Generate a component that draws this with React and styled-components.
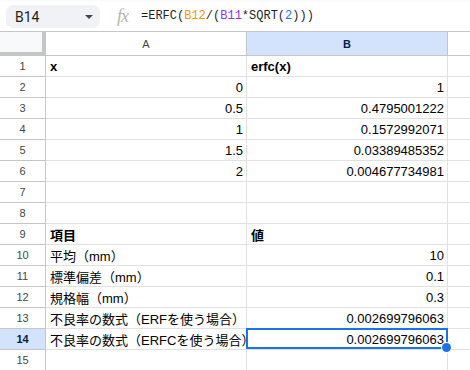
import React from "react";
import styled, { createGlobalStyle, css } from "styled-components";

const Global = createGlobalStyle`
  html, body { margin: 0; padding: 0; background: #fff; overflow: hidden; }
  body { font-family: "Liberation Sans", "Noto Sans CJK JP", Arial, sans-serif; }
`;

const Page = styled.div`
  width: 470px;
  height: 370px;
  display: flex;
  flex-direction: column;
  overflow: hidden;
  background: #fff;
`;

const Toolbar = styled.div`
  height: 31px;
  flex: none;
  display: flex;
  align-items: flex-start;
  padding: 5px 0 0 6px;
  box-sizing: border-box;
  background: linear-gradient(#f9fafb 0, #fff 3px);
`;

const NameBox = styled.div`
  width: 94px;
  height: 23px;
  box-sizing: border-box;
  background: #f0f2f5;
  border-radius: 7px;
  display: flex;
  align-items: center;
  justify-content: space-between;
  padding: 0 7px 0 9px;
  font-family: Roboto, "Liberation Sans", sans-serif;
  font-size: 14px;
  color: #1f1f1f;
`;

const Caret = styled.span`
  width: 0;
  height: 0;
  border-left: 4px solid transparent;
  border-right: 4px solid transparent;
  border-top: 4px solid #444746;
  margin-top: 1px;
`;

const FxIcon = styled.span`
  margin: 0 0 0 17px;
  width: 18px;
  font-family: "Liberation Serif", "DejaVu Serif", serif;
  font-style: italic;
  font-size: 18px;
  line-height: 22px;
  color: #b4b4b4;
  letter-spacing: -1px;
`;

const Formula = styled.div`
  margin-left: 6px;
  font-family: "Liberation Mono", "DejaVu Sans Mono", monospace;
  font-size: 12px;
  line-height: 23px;
  color: #1f1f1f;
  white-space: nowrap;
`;

const Ref = styled.span`
  color: ${(p) => p.$c};
`;

const Grid = styled.div`
  display: grid;
  grid-template-columns: 46px 201px 201px 1fr;
  grid-auto-rows: 21px;
  grid-template-rows: 24px;
  border-top: 1px solid #c4c7c5;
`;

const Corner = styled.div`
  background: #f8f9fa;
  border-right: 4px solid #c4c7c5;
  border-bottom: 4px solid #c4c7c5;
  box-sizing: border-box;
`;

const ColHeader = styled.div`
  box-sizing: border-box;
  border-right: 1px solid #c4c7c5;
  border-bottom: 1px solid #c4c7c5;
  display: flex;
  align-items: center;
  justify-content: center;
  font-family: "Liberation Sans", Arial, sans-serif;
  font-size: 11px;
  color: #444746;
  background: #fff;
  ${(p) =>
    p.$active &&
    css`
      background: #d3e3fd;
      color: #041e49;
      font-weight: bold;
    `}
  ${(p) =>
    p.$last &&
    css`
      border-right: none;
    `}
`;

const RowHeader = styled.div`
  box-sizing: border-box;
  border-right: 1px solid #c4c7c5;
  border-bottom: 1px solid #c4c7c5;
  display: flex;
  align-items: center;
  justify-content: center;
  font-family: "Liberation Sans", Arial, sans-serif;
  font-size: 11px;
  color: #444746;
  background: #fff;
  ${(p) =>
    p.$active &&
    css`
      background: #d3e3fd;
      color: #041e49;
      font-weight: bold;
    `}
`;

const Cell = styled.div`
  position: relative;
  box-sizing: border-box;
  border-right: 1px solid #e1e1e1;
  border-bottom: 1px solid #e1e1e1;
  padding: 0 3px 0 4px;
  display: flex;
  align-items: center;
  justify-content: ${(p) => (p.$num ? "flex-end" : "flex-start")};
  font-family: "Liberation Sans", "Noto Sans CJK JP", Arial, sans-serif;
  font-size: 13px;
  font-weight: ${(p) => (p.$bold ? "bold" : "normal")};
  color: #000;
  white-space: nowrap;
  overflow: ${(p) => (p.$selected ? "visible" : "hidden")};
  z-index: ${(p) => (p.$selected ? 2 : "auto")};
  ${(p) =>
    p.$last &&
    css`
      border-right: none;
    `}
`;

const Selection = styled.div`
  position: absolute;
  top: -1px;
  left: -1px;
  right: -1px;
  bottom: 0;
  border: 2px solid #1a73e8;
  box-sizing: border-box;
  pointer-events: none;
`;

const Handle = styled.div`
  position: absolute;
  right: -5px;
  bottom: -5px;
  width: 9px;
  height: 9px;
  border-radius: 50%;
  background: #1a73e8;
  box-shadow: 0 0 0 1px #fff;
`;

const rows = [
  [{ t: "x", b: true }, { t: "erfc(x)", b: true }],
  [{ t: "0", n: true }, { t: "1", n: true }],
  [{ t: "0.5", n: true }, { t: "0.4795001222", n: true }],
  [{ t: "1", n: true }, { t: "0.1572992071", n: true }],
  [{ t: "1.5", n: true }, { t: "0.03389485352", n: true }],
  [{ t: "2", n: true }, { t: "0.004677734981", n: true }],
  [{ t: "" }, { t: "" }],
  [{ t: "" }, { t: "" }],
  [{ t: "項目", b: true }, { t: "値", b: true }],
  [{ t: "平均（mm）" }, { t: "10", n: true }],
  [{ t: "標準偏差（mm）" }, { t: "0.1", n: true }],
  [{ t: "規格幅（mm）" }, { t: "0.3", n: true }],
  [{ t: "不良率の数式（ERFを使う場合）" }, { t: "0.002699796063", n: true }],
  [{ t: "不良率の数式（ERFCを使う場合）" }, { t: "0.002699796063", n: true }],
  [{ t: "" }, { t: "" }],
];

export default function App() {
  return (
    <Page>
      <Global />
      <Toolbar>
        <NameBox>
          <span>B14</span>
          <Caret />
        </NameBox>
        <FxIcon>fx</FxIcon>
        <Formula>
          =ERFC(<Ref $c="#f29900">B12</Ref>/(<Ref $c="#9334e6">B11</Ref>*SQRT(
          <Ref $c="#1a73e8">2</Ref>)))
        </Formula>
      </Toolbar>
      <Grid>
        <Corner />
        <ColHeader>A</ColHeader>
        <ColHeader $active>B</ColHeader>
        <ColHeader $last />
        {rows.map((r, i) => {
          const rowNo = i + 1;
          const sel = rowNo === 14;
          return (
            <React.Fragment key={rowNo}>
              <RowHeader $active={sel}>{rowNo}</RowHeader>
              <Cell $num={r[0].n} $bold={r[0].b}>
                {r[0].t}
              </Cell>
              <Cell $num={r[1].n} $bold={r[1].b} $selected={sel}>
                {r[1].t}
                {sel && (
                  <Selection>
                    <Handle />
                  </Selection>
                )}
              </Cell>
              <Cell $last />
            </React.Fragment>
          );
        })}
      </Grid>
    </Page>
  );
}
